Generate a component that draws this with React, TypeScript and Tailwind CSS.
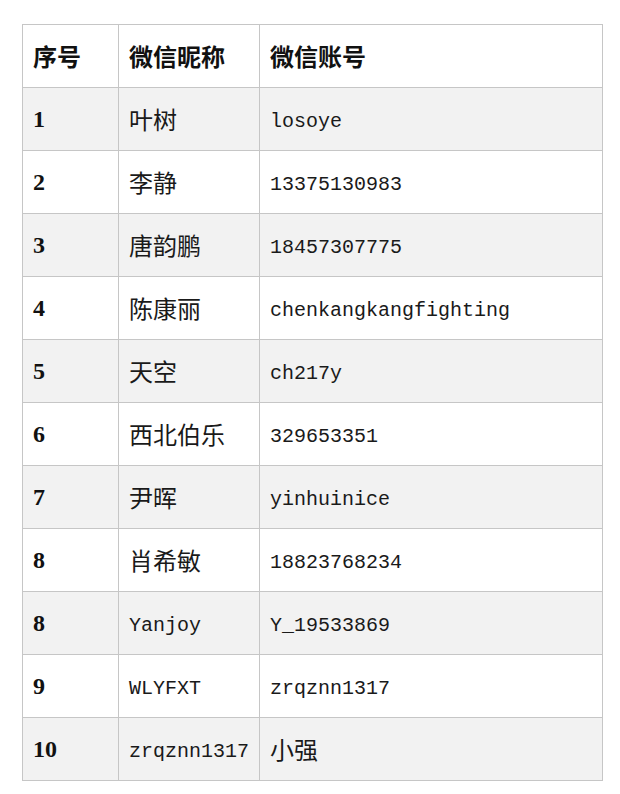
const rows: [string, string, string][] = [
  ['1', '叶树', 'losoye'],
  ['2', '李静', '13375130983'],
  ['3', '唐韵鹏', '18457307775'],
  ['4', '陈康丽', 'chenkangkangfighting'],
  ['5', '天空', 'ch217y'],
  ['6', '西北伯乐', '329653351'],
  ['7', '尹晖', 'yinhuinice'],
  ['8', '肖希敏', '18823768234'],
  ['8', 'Yanjoy', 'Y_19533869'],
  ['9', 'WLYFXT', 'zrqznn1317'],
  ['10', 'zrqznn1317', '小强'],
];

const isCjk = (s: string) => /[\u4e00-\u9fff]/.test(s);

function Cell({ text }: { text: string }) {
  const cls = isCjk(text)
    ? "text-[24px] font-['Noto_Sans_CJK_SC',sans-serif] font-normal"
    : "text-[20px] pt-[6px] font-['Liberation_Mono','Noto_Sans_CJK_SC',monospace]";
  return (
    <td className={`border border-[#c6c6c6] h-[63px] pl-[10px] align-middle text-[#1a1a1a] whitespace-nowrap ${cls}`}>
      {text}
    </td>
  );
}

export default function App() {
  return (
    <div className="min-h-[794px] bg-white pt-[24px] pl-[22px]">
      <table className="border-collapse table-fixed w-[580px]">
        <colgroup>
          <col className="w-[96px]" />
          <col className="w-[141px]" />
          <col className="w-[343px]" />
        </colgroup>
        <thead>
          <tr className="bg-white">
            {['序号', '微信昵称', '微信账号'].map((h) => (
              <th
                key={h}
                className="border border-[#c6c6c6] h-[63px] pl-[10px] text-left align-middle text-[24px] font-bold text-[#111] font-['Noto_Sans_CJK_SC',sans-serif]"
              >
                {h}
              </th>
            ))}
          </tr>
        </thead>
        <tbody>
          {rows.map(([n, nick, acct], i) => (
            <tr key={i} className={i % 2 === 0 ? 'bg-[#f2f2f2]' : 'bg-white'}>
              <td className="border border-[#c6c6c6] h-[63px] pl-[10px] align-middle text-[24px] font-bold text-[#111] font-['Liberation_Serif',serif]">
                {n}
              </td>
              <Cell text={nick} />
              <Cell text={acct} />
            </tr>
          ))}
        </tbody>
      </table>
    </div>
  );
}
